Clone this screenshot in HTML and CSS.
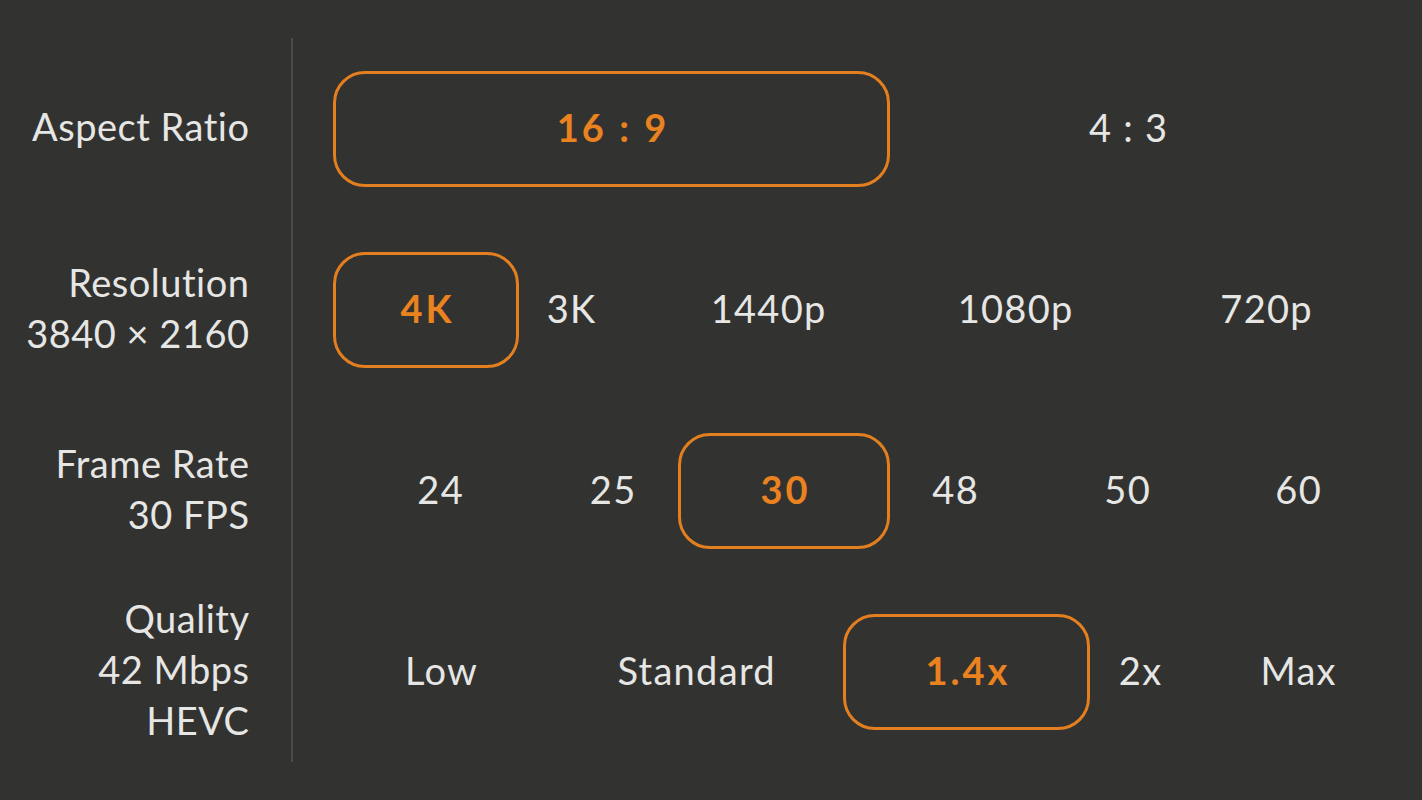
FILE: index.html
```html
<!DOCTYPE html>
<html>
<head>
<meta charset="utf-8">
<link rel="stylesheet" href="styles.css">
</head>
<body>
<div class="panel">
  <div class="labels">
    <div class="label">Aspect Ratio</div>
    <div class="label">Resolution<br>3840 × 2160</div>
    <div class="label">Frame Rate<br>30 FPS</div>
    <div class="label">Quality<br>42 Mbps<br>HEVC</div>
  </div>
  <div class="divider"></div>
  <div class="options">
    <div class="row row-aspect">
      <div class="opt selected">16 : 9</div>
      <div class="opt">4 : 3</div>
    </div>
    <div class="row row-res">
      <div class="opt selected">4K</div>
      <div class="opt">3K</div>
      <div class="opt">1440p</div>
      <div class="opt">1080p</div>
      <div class="opt">720p</div>
    </div>
    <div class="row row-fps">
      <div class="opt">24</div>
      <div class="opt">25</div>
      <div class="opt selected">30</div>
      <div class="opt">48</div>
      <div class="opt">50</div>
      <div class="opt">60</div>
    </div>
    <div class="row row-quality">
      <div class="opt">Low</div>
      <div class="opt">Standard</div>
      <div class="opt selected">1.4x</div>
      <div class="opt">2x</div>
      <div class="opt">Max</div>
    </div>
  </div>
</div>
</body>
</html>
```
FILE: styles.css
```css
html, body {
  margin: 0;
  padding: 0;
  background: #323231;
}
body {
  width: 1422px;
  height: 800px;
  overflow: hidden;
  font-family: "Lato", "Open Sans", sans-serif;
  color: #e6e6e4;
}
.panel {
  display: flex;
  padding-top: 38px;
}
.labels {
  width: 249px;
  display: flex;
  flex-direction: column;
}
.label {
  height: 181px;
  box-sizing: border-box;
  padding-bottom: 4px;
  display: flex;
  align-items: center;
  justify-content: flex-end;
  text-align: right;
  font-size: 38px;
  line-height: 51px;
  letter-spacing: 0.5px;
  margin-right: -0.5px;
}
.divider {
  width: 2px;
  height: 724px;
  margin-left: 42px;
  background: #4a4a49;
}
.options {
  margin-left: 40px;
  display: flex;
  flex-direction: column;
}
.row {
  height: 181px;
  display: grid;
  align-items: center;
}
.row-aspect { grid-template-columns: 557px 476px; }
.row-res { grid-template-columns: 186px 104px 290px 204px 298px; }
.row-fps { grid-template-columns: 214px 131px 212px 130px 214px 128px; }
.row-quality { grid-template-columns: 216px 294px 247px 100px 216px; }
.opt {
  height: 116px;
  box-sizing: border-box;
  padding-bottom: 4px;
  padding-left: 1.3px;
  display: flex;
  align-items: center;
  justify-content: center;
  font-size: 38px;
  letter-spacing: 1.3px;
  white-space: nowrap;
}
.opt.selected {
  border: 3px solid #e47f1f;
  border-radius: 32px;
  color: #e9821f;
  font-weight: 700;
  letter-spacing: 3px;
  padding-left: 3px;
}
```
